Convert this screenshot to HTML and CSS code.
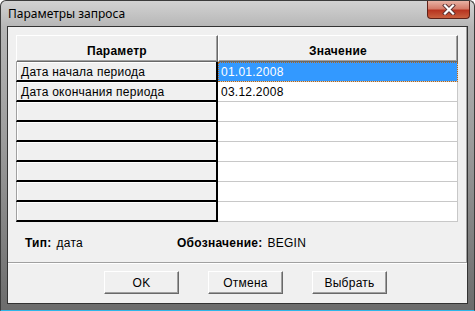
FILE: index.html
```html
<!DOCTYPE html>
<html lang="ru">

<head>
    <meta charset="UTF-8">
    <title>Параметры запроса</title>
    <link rel="stylesheet" href="styles.css">
</head>

<body>
    <div class="window">
        <div class="titlebar">
            <span class="title">Параметры запроса</span>
            <div class="close">
                <svg width="14" height="11" viewBox="0 0 14 11">
                    <path d="M3 1.5 L11 9.5 M11 1.5 L3 9.5" stroke="#5a3030" stroke-width="4" stroke-linecap="square"/>
                    <path d="M3 1.5 L11 9.5 M11 1.5 L3 9.5" stroke="#fff" stroke-width="2.2" stroke-linecap="square"/>
                </svg>
            </div>
        </div>

        <div class="client">
            <div class="panel">
                <div class="grid">
                    <div class="head">Параметр</div>
                    <div class="head">Значение</div>

                    <div class="name">Дата начала периода</div>
                    <div class="value sel">01.01.2008</div>
                    <div class="name">Дата окончания периода</div>
                    <div class="value">03.12.2008</div>
                    <div class="name"></div>
                    <div class="value"></div>
                    <div class="name"></div>
                    <div class="value"></div>
                    <div class="name"></div>
                    <div class="value"></div>
                    <div class="name"></div>
                    <div class="value"></div>
                    <div class="name"></div>
                    <div class="value"></div>
                    <div class="name"></div>
                    <div class="value"></div>
                </div>

                <div class="info">
                    <div class="field type"><b>Тип:</b> <span>дата</span></div>
                    <div class="field"><b>Обозначение:</b> <span>BEGIN</span></div>
                </div>
            </div>

            <div class="footer">
                <button class="btn">OK</button>
                <button class="btn">Отмена</button>
                <button class="btn">Выбрать</button>
            </div>
        </div>
    </div>
</body>

</html>
```

FILE: styles.css
```css
body {
    margin: 0;
    background: #fff;
    font-family: "Liberation Sans", Arial, sans-serif;
    font-size: 12px;
    letter-spacing: 0.25px;
    color: #000;
}

.window {
    width: 475px;
    height: 311px;
    box-sizing: border-box;
    display: flex;
    flex-direction: column;
    padding: 0 6px 6px;
    border: 1px solid #3b3b3b;
    border-bottom-color: #2eb6e8;
    border-radius: 6px 6px 0 0;
    background: linear-gradient(#d2d2d2, #b6b6b6 26px, #9c9c9c 140px, #6c6c6c);
}

.titlebar {
    height: 25px;
    display: flex;
    justify-content: space-between;
    align-items: flex-start;
}

.title {
    font-family: "Noto Sans", sans-serif;
    font-size: 12px;
    letter-spacing: 0;
    line-height: 26px;
    padding-left: 1px;
}

.close {
    width: 43px;
    height: 18px;
    box-sizing: border-box;
    margin-right: -2px;
    display: flex;
    align-items: center;
    justify-content: center;
    border: 1px solid #5e2118;
    border-top: none;
    border-radius: 0 0 4px 4px;
    background: linear-gradient(#e8b2a4, #d47c6a 45%, #b73420 55%, #c9603f);
}

.client {
    flex: 1;
    display: flex;
    flex-direction: column;
    border: 1px solid #333;
    background: #f0f0f0;
}

.panel {
    flex: 1;
    padding: 8px 0 0 8px;
    border-right: 1px solid #a0a0a0;
    border-bottom: 1px solid #a0a0a0;
}

.grid {
    width: 442px;
    display: grid;
    grid-template-columns: 202px 240px;
    grid-template-rows: 27px;
    grid-auto-rows: 20px;
}

.grid > div {
    box-sizing: border-box;
    white-space: nowrap;
    overflow: hidden;
}

.head {
    display: flex;
    align-items: center;
    justify-content: center;
    padding-top: 4px;
    font-weight: bold;
    background: #f0f0f0;
    border-top: 1px solid #fff;
    border-left: 1px solid #fff;
    border-right: 1px solid #696969;
    border-bottom: 1px solid #696969;
    box-shadow: inset -1px -1px #a0a0a0;
}

.name {
    padding: 1px 0 0 4px;
    line-height: 18px;
    background: #f0f0f0;
    border-left: 1px solid #a0a0a0;
    border-right: 2px solid #000;
    border-bottom: 2px solid #000;
    box-shadow: inset 1px 1px #fff;
}

.value {
    padding: 1px 0 0 3px;
    line-height: 19px;
    background: #fff;
    border-right: 1px solid #c8c8c8;
    border-bottom: 1px solid #c8c8c8;
}

.value.sel {
    background: #3399ff;
    color: #fff;
    outline: 1px dotted #b0661c;
    outline-offset: -1px;
}

.info {
    height: 40px;
    display: flex;
    align-items: center;
    padding: 1px 0 0 9px;
    box-sizing: border-box;
}

.field {
    display: flex;
    gap: 5px;
}

.field.type {
    width: 152px;
}

.footer {
    height: 40px;
    box-sizing: border-box;
    display: flex;
    align-items: flex-start;
    gap: 29px;
    padding: 7px 0 0 96px;
    border-top: 1px solid #fff;
}

.btn {
    width: 75px;
    height: 23px;
    padding: 1px 0 0;
    font-family: "Liberation Sans", Arial, sans-serif;
    font-size: 12px;
    letter-spacing: 0.25px;
    color: #000;
    background: #f0f0f0;
    border: 1px solid;
    border-color: #fff #696969 #696969 #fff;
    box-shadow: inset -1px -1px #a0a0a0;
}
```
